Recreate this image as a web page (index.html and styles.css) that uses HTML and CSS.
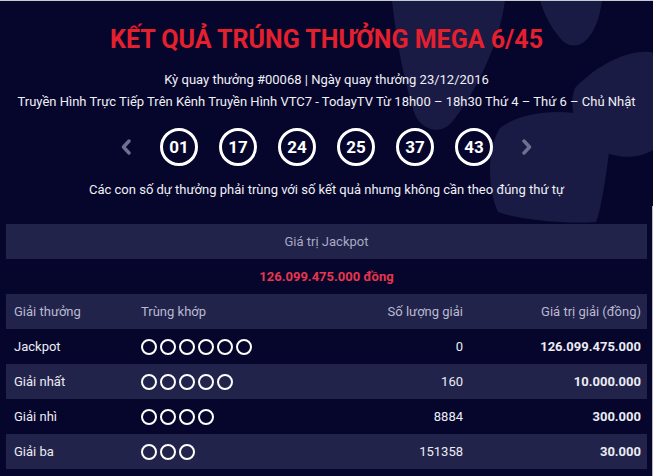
FILE: index.html
```html
<!DOCTYPE html>
<html lang="vi">
<head>
<meta charset="utf-8">
<title>Kết quả Mega 6/45</title>
<link rel="stylesheet" href="styles.css">
</head>
<body>
<div class="page">
  <svg class="decor" width="653" height="240" viewBox="0 0 653 240" aria-hidden="true">
    <path class="petal" d="M392 0 L505 0 C500 40 478 90 452 122 C440 136 420 130 414 112 C404 80 396 40 392 0 Z"/>
    <path class="petal" d="M540 0 L602 0 C600 18 594 34 584 42 C576 48 566 46 560 38 C550 26 544 14 540 0 Z"/>
    <path class="petal" d="M575 88 C600 62 630 50 650 52 L653 53 L653 150 C640 158 620 160 600 150 C580 138 566 110 575 88 Z"/>
    <path class="petal" d="M500 128 C520 112 560 108 590 116 C606 122 612 138 608 160 C604 190 600 212 596 222 C566 224 520 220 498 212 C488 190 486 150 500 128 Z"/>
  </svg>
  <div class="content">
    <h1 class="title">KẾT QUẢ TRÚNG THƯỞNG MEGA 6/45</h1>
    <p class="meta">Kỳ quay thưởng #00068 | Ngày quay thưởng 23/12/2016</p>
    <p class="meta">Truyền Hình Trực Tiếp Trên Kênh Truyền Hình VTC7 - TodayTV Từ 18h00 – 18h30 Thứ 4 – Thứ 6 – Chủ Nhật</p>
    <div class="balls">
      <svg class="arrow" width="10" height="16" viewBox="0 0 10 16" aria-hidden="true"><path d="M8 2 L2.5 8 L8 14"/></svg>
      <span class="ball">01</span>
      <span class="ball">17</span>
      <span class="ball">24</span>
      <span class="ball">25</span>
      <span class="ball">37</span>
      <span class="ball">43</span>
      <svg class="arrow" width="10" height="16" viewBox="0 0 10 16" aria-hidden="true"><path d="M2 2 L7.5 8 L2 14"/></svg>
    </div>
    <p class="note">Các con số dự thưởng phải trùng với số kết quả nhưng không cần theo đúng thứ tự</p>
    <div class="table">
      <div class="jp-head">Giá trị Jackpot</div>
      <div class="jp-value">126.099.475.000 đồng</div>
      <div class="row head">
        <span>Giải thưởng</span><span>Trùng khớp</span><span class="r">Số lượng giải</span><span class="r">Giá trị giải (đồng)</span>
      </div>
      <div class="row">
        <span>Jackpot</span>
        <span class="dots"><i></i><i></i><i></i><i></i><i></i><i></i></span>
        <span class="r">0</span><span class="r b">126.099.475.000</span>
      </div>
      <div class="row alt">
        <span>Giải nhất</span>
        <span class="dots"><i></i><i></i><i></i><i></i><i></i></span>
        <span class="r">160</span><span class="r b">10.000.000</span>
      </div>
      <div class="row">
        <span>Giải nhì</span>
        <span class="dots"><i></i><i></i><i></i><i></i></span>
        <span class="r">8884</span><span class="r b">300.000</span>
      </div>
      <div class="row alt">
        <span>Giải ba</span>
        <span class="dots"><i></i><i></i><i></i></span>
        <span class="r">151358</span><span class="r b">30.000</span>
      </div>
    </div>
  </div>
</div>
</body>
</html>
```

FILE: styles.css
```css
* { box-sizing: border-box; }
html, body { margin: 0; padding: 0; }
body {
  background: #06062c;
  font-family: Roboto, "Noto Sans", "DejaVu Sans", sans-serif;
  color: #ececf4;
  width: 653px;
  height: 476px;
  overflow: hidden;
  border-top: 1px solid #c9c9d2;
}
.page {
  position: relative;
  height: 475px;
  overflow: hidden;
}
.page::after {
  content: "";
  position: absolute;
  top: 205px;
  right: 0;
  bottom: 0;
  width: 1px;
  background: #b7b3bf;
}
.decor {
  position: absolute;
  top: -1px;
  left: 0;
}
.petal { fill: #1a1b44; }
.content {
  position: relative;
  padding-top: 24px;
}
.title {
  margin: 0;
  text-align: center;
  color: #e4202e;
  font-size: 25px;
  line-height: 29px;
  font-weight: 700;
  letter-spacing: 0;
}
.meta {
  margin: 0;
  text-align: center;
  font-size: 13px;
  line-height: 22px;
  color: #f0f0f6;
}
.title + .meta { margin-top: 15px; }
.balls {
  margin-top: 15px;
  display: flex;
  justify-content: center;
  align-items: center;
  gap: 21px;
  height: 38px;
}
.arrow {
  margin: 0 8px;
  fill: none;
  stroke: #6f7090;
  stroke-width: 3.4;
  stroke-linecap: round;
  stroke-linejoin: round;
}
.ball {
  width: 38px;
  height: 38px;
  border: 3px solid #ffffff;
  border-radius: 50%;
  display: flex;
  align-items: center;
  justify-content: center;
  font-weight: 700;
  font-size: 17px;
  color: #ffffff;
}
.note {
  margin: 13px 0 0;
  text-align: center;
  font-size: 13px;
  line-height: 22px;
  color: #f0f0f6;
}
.table {
  margin: 23px 6px 0;
  font-size: 13px;
}
.jp-head {
  height: 35px;
  line-height: 35px;
  text-align: center;
  background: #22234a;
  color: #a9aac4;
}
.jp-value {
  height: 35px;
  line-height: 35px;
  text-align: center;
  color: #e6364f;
  font-weight: 700;
}
.row {
  display: grid;
  grid-template-columns: 127px 1fr 120px 178px;
  align-items: center;
  height: 35px;
  padding: 0 6px 0 8px;
  color: #ececf4;
}
.row.head, .row.alt { background: #22234a; }
.row.head { color: #b9bad2; }
.r { text-align: right; }
.b { font-weight: 700; }
.dots {
  display: flex;
  gap: 3px;
  align-items: center;
}
.dots i {
  display: block;
  width: 16px;
  height: 16px;
  border: 2px solid #ffffff;
  border-radius: 50%;
}
```
